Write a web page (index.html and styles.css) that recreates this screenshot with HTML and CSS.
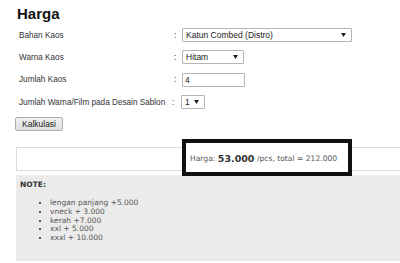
FILE: index.html
```html
<!DOCTYPE html>
<html lang="id">
<head>
    <meta charset="UTF-8">
    <title>Harga</title>
    <link rel="stylesheet" href="styles.css">
</head>
<body>
    <div class="page">
        <h2 class="page-title">Harga</h2>

        <div class="form-grid">
            <div class="label">Bahan Kaos</div>
            <div class="colon">:</div>
            <div class="field">
                <select class="select select-wide">
                    <option>Katun Combed (Distro)</option>
                </select>
            </div>

            <div class="label">Warna Kaos</div>
            <div class="colon">:</div>
            <div class="field">
                <select class="select select-mid">
                    <option>Hitam</option>
                </select>
            </div>

            <div class="label">Jumlah Kaos</div>
            <div class="colon">:</div>
            <div class="field">
                <input class="text-input" type="text" value="4">
            </div>

            <div class="label">Jumlah Warna/Film pada Desain Sablon</div>
            <div class="colon colon-tight">:</div>
            <div class="field">
                <select class="select select-small">
                    <option>1</option>
                </select>
            </div>
        </div>

        <button class="calc-button">Kalkulasi</button>

        <div class="result">
            <div class="highlight">
                Harga:&nbsp;<b class="price">53.000</b>&nbsp;/pcs, total = 212.000
            </div>
        </div>

        <div class="note">
            <div class="note-title">NOTE:</div>
            <ul class="note-list">
                <li>lengan panjang +5.000</li>
                <li>vneck + 3.000</li>
                <li>kerah +7.000</li>
                <li>xxl + 5.000</li>
                <li>xxxl + 10.000</li>
            </ul>
        </div>
    </div>
</body>
</html>
```

FILE: styles.css
```css
* {
    margin: 0;
    padding: 0;
    box-sizing: border-box;
}

body {
    background: #fff;
    font-family: 'Liberation Sans', Arial, sans-serif;
    font-size: 8.2px;
    color: #333;
    overflow: hidden;
}

.page {
    padding-left: 16px;
}

.page-title {
    font-size: 15px;
    font-weight: 700;
    color: #111;
    line-height: 18px;
    padding: 5px 0 0 1px;
    margin-bottom: 1px;
}

.form-grid {
    display: grid;
    grid-template-columns: 155px 8px auto;
    grid-auto-rows: 22.3px;
    align-items: center;
    padding-left: 3px;
}

.colon {
    color: #333;
}

.colon-tight {
    margin-left: -2px;
}

.select,
.text-input {
    height: 14px;
    border: 1px solid #b5b5b5;
    background-color: #fff;
    font-family: 'Liberation Sans', Arial, sans-serif;
    font-size: 8.5px;
    color: #222;
    padding: 0 0 0 3px;
    border-radius: 1px;
    outline: none;
}

.select {
    appearance: none;
    -webkit-appearance: none;
    background-image: url("data:image/svg+xml;utf8,<svg xmlns='http://www.w3.org/2000/svg' width='5' height='4'><path d='M0 0h5L2.5 4z' fill='%23222'/></svg>");
    background-repeat: no-repeat;
    background-position: right 5px center;
}

.select-wide {
    width: 170px;
}

.select-mid {
    width: 62px;
}

.select-small {
    width: 24px;
    margin-left: -1px;
}

.text-input {
    width: 63px;
    padding-left: 2px;
}

.calc-button {
    display: block;
    margin: 4px 0 0 -1px;
    width: 48px;
    height: 14px;
    border: 1px solid #adadad;
    border-radius: 2px;
    background: linear-gradient(#f0f0f0, #e0e0e0);
    font-family: 'Liberation Sans', Arial, sans-serif;
    font-size: 8.5px;
    color: #222;
}

.result {
    margin-top: 16px;
    height: 24px;
    border: 1px solid #dcdcdc;
    border-right: none;
    display: flex;
    align-items: center;
}

.highlight {
    margin-left: 165px;
    margin-bottom: 4px;
    width: 170px;
    height: 37px;
    border: 4px solid #111;
    background: #fff;
    display: flex;
    align-items: center;
    padding: 2px 0 0 4px;
    font-family: 'DejaVu Sans', Verdana, sans-serif;
    font-size: 7.6px;
    color: #555;
    white-space: nowrap;
}

.price {
    font-size: 9.5px;
    color: #333;
}

.note {
    margin-top: 4px;
    background: #ebebeb;
    padding: 5px 4px 18px;
    font-family: 'DejaVu Sans', Verdana, sans-serif;
    font-size: 7.5px;
    color: #555;
}

.note-title {
    font-weight: 700;
    color: #333;
    margin-bottom: 10px;
}

.note-list {
    padding-left: 30px;
    list-style: square;
    line-height: 8.7px;
}
```
